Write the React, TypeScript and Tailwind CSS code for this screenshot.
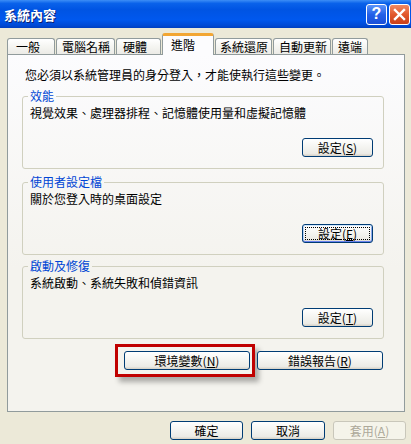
import React from 'react';

const tabs = [
  { label: '一般', w: 'w-[48px] pl-[8px]' },
  { label: '電腦名稱', w: 'w-[59px] pl-[5px]' },
  { label: '硬體', w: 'w-[45px] pl-[6px]' },
  { label: '進階', w: 'w-[52px] pl-[8px]', active: true },
  { label: '系統還原', w: 'w-[57px] pl-[4px]' },
  { label: '自動更新', w: 'w-[58px] pl-[5px]' },
  { label: '遠端', w: 'w-[36px] pl-[5px]' },
];

const groups = [
  { title: '效能', desc: '視覺效果、處理器排程、記憶體使用量和虛擬記憶體', key: 'S', gap: 'mt-[8px]' },
  { title: '使用者設定檔', desc: '關於您登入時的桌面設定', key: 'E', gap: 'mt-[6px]', focused: true },
  { title: '啟動及修復', desc: '系統啟動、系統失敗和偵錯資訊', key: 'T', gap: 'mt-[4px]' },
];

interface XpButtonProps {
  text: string;
  mnemonic?: string;
  width: string;
  focused?: boolean;
  disabled?: boolean;
}

const XpButton: React.FC<XpButtonProps> = ({ text, mnemonic, width, focused, disabled }) => (
  <button
    className={`relative flex h-[19px] ${width} items-center justify-center rounded-[3px] border text-[12px] leading-[12px] ${
      disabled
        ? 'border-[#C9C7BA] bg-[#F5F4EA] text-[#ACA899]'
        : 'border-[#003C74] bg-[linear-gradient(to_bottom,#FFFFFF_0%,#F6F6F3_40%,#ECEBE6_85%,#D6D0C5_100%)] text-black'
    } ${focused ? 'shadow-[inset_0_1px_0_#CEE7FF,inset_0_-1px_0_#6982EE,inset_1px_0_0_#B8D2F8,inset_-1px_0_0_#8DA9EC]' : ''}`}
  >
    {focused && <span className="absolute inset-[2px] border border-dotted border-black" />}
    <span>
      {text}
      {mnemonic && (
        <>
          (<span className="underline">{mnemonic}</span>)
        </>
      )}
    </span>
  </button>
);

export default function App() {
  return (
    <div className="h-[444px] w-[411px] overflow-hidden bg-[#ECE9D8] font-['Noto_Sans_CJK_TC','Noto_Sans_CJK_SC',sans-serif] text-black">
      {/* Title bar */}
      <div className="flex h-[28px] items-center justify-between bg-[linear-gradient(to_bottom,#3D8EF6_0%,#0A62EA_12%,#0054E3_35%,#0058EE_70%,#004AD6_90%,#003FC0_100%)] pl-[4px] pr-[1px]">
        <span className="text-[13px] font-bold leading-[13px] text-white [text-shadow:1px_1px_0_#0A1F70]">系統內容</span>
        <div className="flex gap-[2px]">
          <div className="flex h-[21px] w-[21px] items-center justify-center rounded-[3px] border border-white bg-[linear-gradient(to_bottom,#5C95FA,#2360E8_50%,#1A4FD8)] text-[16px] font-bold leading-none text-white font-['Liberation_Sans',sans-serif]">
            ?
          </div>
          <div className="flex h-[21px] w-[21px] items-center justify-center rounded-[3px] border border-white bg-[linear-gradient(to_bottom,#F08A64,#E2582C_50%,#C8401A)]">
            <svg width="13" height="13" viewBox="0 0 13 13">
              <path d="M2 2 L11 11 M11 2 L2 11" stroke="white" strokeWidth="2.4" strokeLinecap="square" />
            </svg>
          </div>
        </div>
      </div>

      {/* Tabs */}
      <div className="ml-[7px] mt-[5px] flex h-[21px] items-end gap-[1px]">
        {tabs.map((t) =>
          t.active ? (
            <div
              key={t.label}
              className={`relative z-10 -mb-px h-[22px] ${t.w} rounded-t-[3px] border-x border-[#919B9C] border-t-[3px] border-t-[#F2A633] bg-[#FCFCFE] pt-[3px] text-[12px] leading-[12px]`}
            >
              {t.label}
            </div>
          ) : (
            <div
              key={t.label}
              className={`h-[16px] ${t.w} rounded-t-[3px] border-x border-t border-[#919B9C] bg-[linear-gradient(to_bottom,#FFFFFF,#F3F3EF_60%,#ECEBE6)] pt-[2px] text-[12px] leading-[12px]`}
            >
              {t.label}
            </div>
          )
        )}
      </div>

      {/* Tab page */}
      <div className="ml-[7px] h-[358px] w-[398px] border border-[#919B9C] bg-[linear-gradient(to_bottom,#FCFCFE,#F4F3EE_60%)] pt-[14px]">
        <p className="ml-[17px] text-[12px] leading-[12px]">您必須以系統管理員的身分登入，才能使執行這些變更。</p>

        <div className="ml-[14px] w-[362px]">
          {groups.map((g) => (
            <fieldset
              key={g.title}
              className={`${g.gap} flex flex-col rounded-[3px] border border-[#D0D0BF] pb-[11px] pl-[7px] pr-[10px]`}
            >
              <legend className="-ml-[2px] px-[2px] text-[12px] leading-[14px] text-[#0046D5]">{g.title}</legend>
              <div className="mt-[4px] text-[12px] leading-[12px]">{g.desc}</div>
              <div className="mt-[19px] flex justify-end">
                <XpButton text="設定" mnemonic={g.key} width="w-[71px]" focused={g.focused} />
              </div>
            </fieldset>
          ))}

          <div className="mt-[12px] flex justify-end gap-[7px] pr-[1px]">
            <div className="relative">
              <XpButton text="環境變數" mnemonic="N" width="w-[126px]" />
              <div className="absolute -bottom-[7px] -left-[9px] -right-[5px] -top-[7px] border-[3px] border-[#C00000] shadow-[4px_5px_5px_rgba(0,0,0,0.3)]" />
            </div>
            <XpButton text="錯誤報告" mnemonic="R" width="w-[126px]" />
          </div>
        </div>
      </div>

      {/* Dialog buttons */}
      <div className="mt-[9px] flex justify-end gap-[8px] pr-[5px]">
        <XpButton text="確定" width="w-[73px]" />
        <XpButton text="取消" width="w-[74px]" />
        <XpButton text="套用" mnemonic="A" width="w-[73px]" disabled />
      </div>
    </div>
  );
}
